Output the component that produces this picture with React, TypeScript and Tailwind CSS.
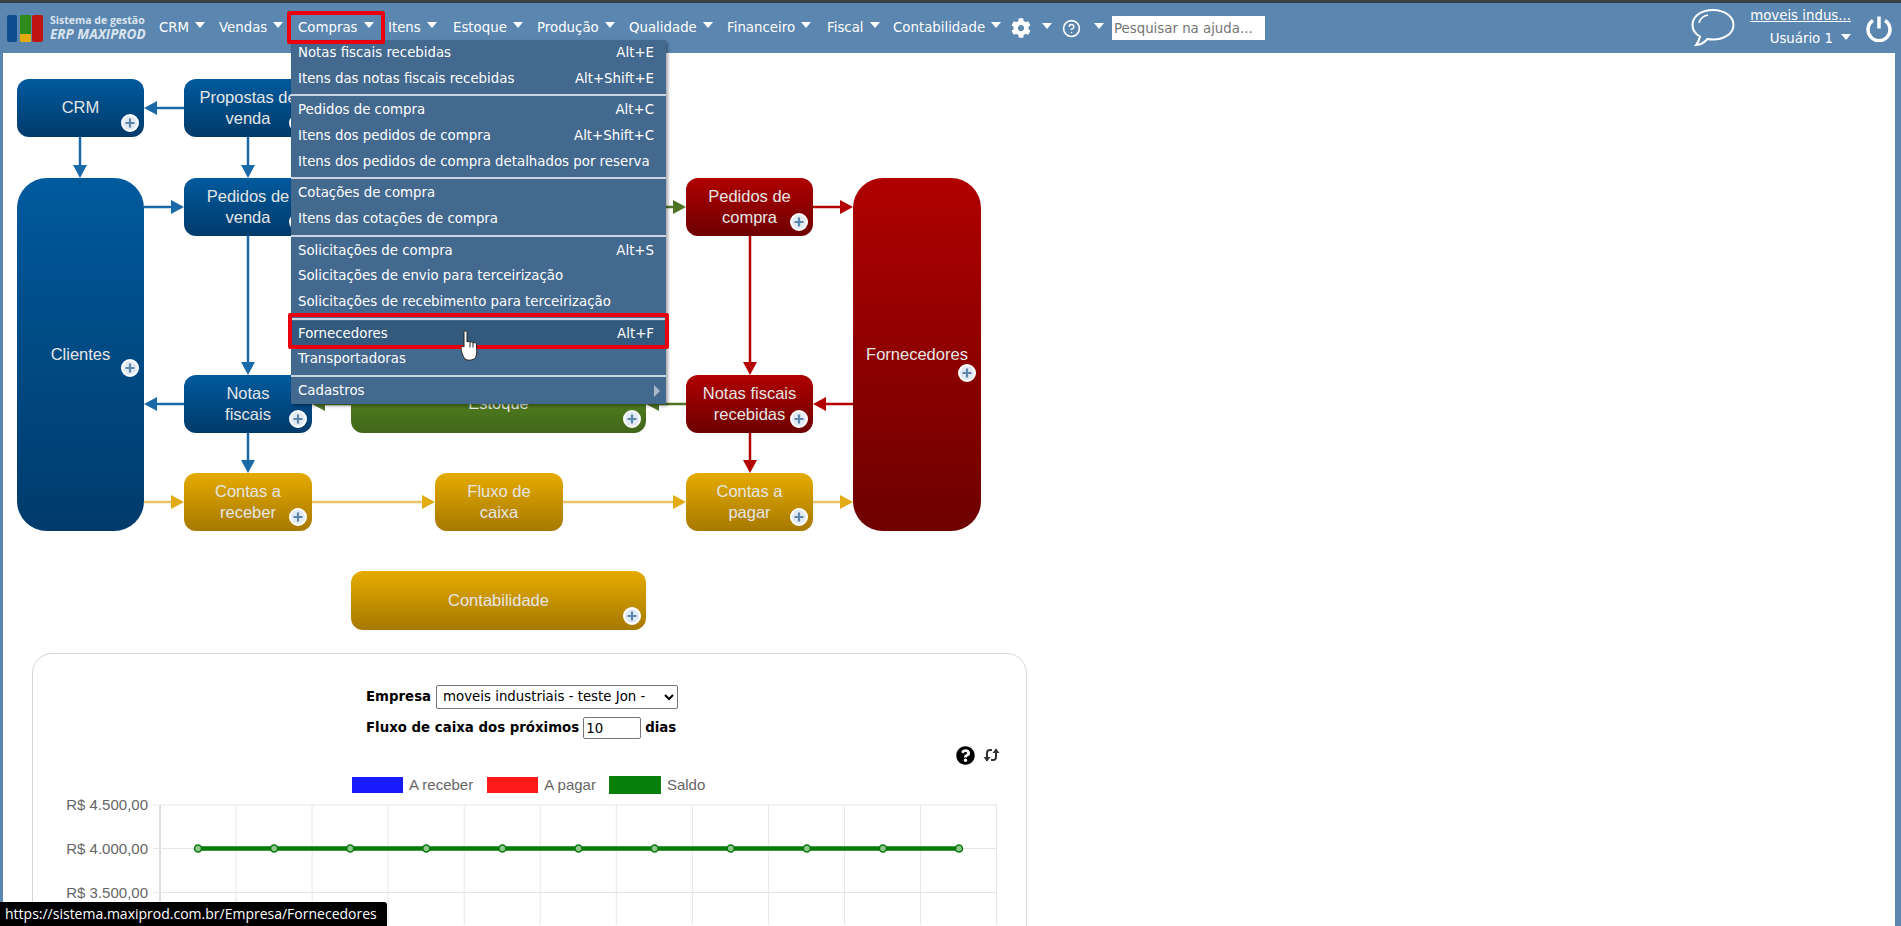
import React from 'react';
import { FaCog, FaQuestionCircle } from 'react-icons/fa';
import { CircleHelp } from 'lucide-react';

const sans = "font-['DejaVu_Sans',sans-serif]";

const navItems = [
  { label: 'CRM', w: 'w-[60px]' },
  { label: 'Vendas', w: 'w-[79px]' },
  { label: 'Compras', w: 'w-[90px]' },
  { label: 'Itens', w: 'w-[65px]' },
  { label: 'Estoque', w: 'w-[84px]' },
  { label: 'Produção', w: 'w-[92px]' },
  { label: 'Qualidade', w: 'w-[98px]' },
  { label: 'Financeiro', w: 'w-[100px]' },
  { label: 'Fiscal', w: 'w-[66px]' },
  { label: 'Contabilidade', w: 'w-[118px]' },
];

type MenuRow = { label: string; keys?: string; sub?: boolean; active?: boolean };

const menuGroups: MenuRow[][] = [
  [
    { label: 'Notas fiscais recebidas', keys: 'Alt+E' },
    { label: 'Itens das notas fiscais recebidas', keys: 'Alt+Shift+E' },
  ],
  [
    { label: 'Pedidos de compra', keys: 'Alt+C' },
    { label: 'Itens dos pedidos de compra', keys: 'Alt+Shift+C' },
    { label: 'Itens dos pedidos de compra detalhados por reserva' },
  ],
  [{ label: 'Cotações de compra' }, { label: 'Itens das cotações de compra' }],
  [
    { label: 'Solicitações de compra', keys: 'Alt+S' },
    { label: 'Solicitações de envio para terceirização' },
    { label: 'Solicitações de recebimento para terceirização' },
  ],
  [{ label: 'Fornecedores', keys: 'Alt+F', active: true }, { label: 'Transportadoras' }],
  [{ label: 'Cadastros', sub: true }],
];

const Tri = () => (
  <span className="inline-block w-0 h-0 border-l-[5px] border-r-[5px] border-t-[6px] border-l-transparent border-r-transparent border-t-white" />
);

const blue = 'from-[#005a9e] to-[#003b6b]';
const red = 'from-[#b00000] to-[#6e0000]';
const gold = 'from-[#e6ab00] to-[#a67900]';

const nodes: { label: string[]; cls: string; color: string; noPlus?: boolean; plus?: string }[] = [
  { label: ['CRM'], cls: 'left-[14px] top-[26px] w-[127px] h-[58px] rounded-[12px]', color: blue },
  { label: ['Propostas de', 'venda'], cls: 'left-[181px] top-[26px] w-[128px] h-[58px] rounded-[12px]', color: blue },
  { label: ['Clientes'], cls: 'left-[14px] top-[125px] w-[127px] h-[353px] rounded-[30px]', color: blue, plus: 'bottom-[154px]' },
  { label: ['Pedidos de', 'venda'], cls: 'left-[181px] top-[125px] w-[128px] h-[58px] rounded-[12px]', color: blue },
  { label: ['Notas', 'fiscais'], cls: 'left-[181px] top-[322px] w-[128px] h-[58px] rounded-[12px]', color: blue },
  { label: ['Estoque'], cls: 'left-[348px] top-[322px] w-[295px] h-[58px] rounded-[12px]', color: 'from-[#5d8f24] to-[#416619]' },
  { label: ['Pedidos de', 'compra'], cls: 'left-[683px] top-[125px] w-[127px] h-[58px] rounded-[12px]', color: red },
  { label: ['Notas fiscais', 'recebidas'], cls: 'left-[683px] top-[322px] w-[127px] h-[58px] rounded-[12px]', color: red },
  { label: ['Fornecedores'], cls: 'left-[850px] top-[125px] w-[128px] h-[353px] rounded-[30px]', color: red, plus: 'bottom-[149px]' },
  { label: ['Contas a', 'receber'], cls: 'left-[181px] top-[420px] w-[128px] h-[58px] rounded-[12px]', color: gold },
  { label: ['Fluxo de', 'caixa'], cls: 'left-[432px] top-[420px] w-[128px] h-[58px] rounded-[12px]', color: gold, noPlus: true },
  { label: ['Contas a', 'pagar'], cls: 'left-[683px] top-[420px] w-[127px] h-[58px] rounded-[12px]', color: gold },
  { label: ['Contabilidade'], cls: 'left-[348px] top-[518px] w-[295px] h-[59px] rounded-[12px]', color: gold },
];

// [x1, y1, x2, y2, colour of the line, colour of the head]; coordinates inside the diagram
const arrows: [number, number, number, number, string, string][] = [
  [181, 55, 141, 55, '#1b6aa8', '#1b6aa8'],
  [77, 84, 77, 125, '#1b6aa8', '#1b6aa8'],
  [245, 84, 245, 125, '#1b6aa8', '#1b6aa8'],
  [141, 154, 181, 154, '#1b6aa8', '#1b6aa8'],
  [245, 183, 245, 322, '#1b6aa8', '#1b6aa8'],
  [181, 351, 141, 351, '#1b6aa8', '#1b6aa8'],
  [245, 380, 245, 420, '#1b6aa8', '#1b6aa8'],
  [141, 449, 181, 449, '#ecc268', '#e2ab14'],
  [309, 449, 432, 449, '#ecc268', '#e2ab14'],
  [560, 449, 683, 449, '#ecc268', '#e2ab14'],
  [810, 449, 850, 449, '#ecc268', '#e2ab14'],
  [660, 154, 683, 154, '#4f7325', '#4f7325'],
  [348, 351, 309, 351, '#4f7325', '#4f7325'],
  [683, 351, 643, 351, '#4f7325', '#4f7325'],
  [810, 154, 850, 154, '#b30000', '#b30000'],
  [747, 183, 747, 322, '#b30000', '#b30000'],
  [850, 351, 810, 351, '#b30000', '#b30000'],
  [747, 380, 747, 420, '#b30000', '#b30000'],
];

const Arrow = ({ a }: { a: (typeof arrows)[number] }) => {
  const [x1, y1, x2, y2, line, head] = a;
  const dx = Math.sign(x2 - x1);
  const dy = Math.sign(y2 - y1);
  const bx = x2 - dx * 13;
  const by = y2 - dy * 13;
  const points = `${x2},${y2} ${bx - dy * 7},${by - dx * 7} ${bx + dy * 7},${by + dx * 7}`;
  return (
    <g>
      <line x1={x1} y1={y1} x2={bx} y2={by} stroke={line} strokeWidth="2.5" />
      <polygon points={points} fill={head} />
    </g>
  );
};

const Plus = ({ pos }: { pos?: string }) => (
  <span className={`absolute right-[5px] ${pos ?? 'bottom-[5px]'} w-[18px] h-[18px] rounded-full bg-[#e3eaf2] border-2 border-white flex items-center justify-center`}>
    <svg width="10" height="10" viewBox="0 0 10 10">
      <path d="M5 0.5v9M0.5 5h9" stroke="#5b86b0" strokeWidth="2.2" />
    </svg>
  </span>
);

const Chart = () => {
  const xs = Array.from({ length: 12 }, (_, i) => 127 + i * 76.05);
  const points = Array.from({ length: 11 }, (_, i) => 165 + i * 76.1);
  const rows = [
    { y: 30, label: 'R$ 4.500,00' },
    { y: 73.5, label: 'R$ 4.000,00' },
    { y: 117.5, label: 'R$ 3.500,00' },
  ];
  return (
    <svg width="970" height="150" viewBox="0 0 970 150" className="block">
      {xs.map((x, i) => (
        <line key={x} x1={x} y1={30} x2={x} y2={150} stroke={i === 0 ? '#bdbdbd' : '#e6e6e6'} />
      ))}
      {rows.map(r => (
        <g key={r.y}>
          <line x1={120} y1={r.y} x2={964} y2={r.y} stroke="#e6e6e6" />
          <text x={115} y={r.y + 5} textAnchor="end" fontSize="15" fill="#666" fontFamily="'Liberation Sans', sans-serif">
            {r.label}
          </text>
        </g>
      ))}
      <line x1={165} y1={73.5} x2={926} y2={73.5} stroke="#067a06" strokeWidth="4.5" />
      {points.map(x => (
        <circle key={x} cx={x} cy={73.5} r={3.5} fill="#8cc78c" stroke="#0a7a0a" strokeWidth="1.5" />
      ))}
    </svg>
  );
};

export default function App() {
  return (
    <div className="relative h-[926px] overflow-hidden bg-white">
      <div className="h-[3px] bg-[#3b4045]" />
      <header className={`h-[50px] bg-[#5b86b0] flex items-center text-[13.33px] text-white ${sans}`}>
        <div className="w-[159px] pl-[7px] flex items-center gap-[7px]">
          <svg width="36" height="27" viewBox="0 0 36 27" className="shrink-0">
            <rect x="0" width="10" height="27" rx="2" fill="#0f4f8f" />
            <rect x="13" width="11" height="19" rx="1" fill="#2f8a1e" />
            <rect x="13" y="19" width="11" height="8" rx="1" fill="#e5ac12" />
            <rect x="25" width="11" height="27" rx="2" fill="#c01414" />
          </svg>
          <div className="font-['Open_Sans',sans-serif] font-bold text-[#d9e4ef] whitespace-nowrap">
            <div className="text-[10.5px] leading-[13px]">Sistema de gestão</div>
            <div className="text-[13.5px] leading-[15px] italic">ERP MAXIPROD</div>
          </div>
        </div>
        {navItems.map(item => (
          <div key={item.label} className={`${item.w} shrink-0 flex items-center gap-[6px]`}>
            <span>{item.label}</span>
            <span className="mb-[5px] flex"><Tri /></span>
          </div>
        ))}
        <div className="w-[31px] shrink-0 flex">
          <FaCog className="w-[20px] h-[20px]" />
        </div>
        <span className="mb-[5px] flex w-[20px]"><Tri /></span>
        <CircleHelp className="w-[19px] h-[19px] shrink-0" strokeWidth={2} />
        <span className="ml-[13px] mb-[5px] flex w-[18px]"><Tri /></span>
        <input
          readOnly
          placeholder="Pesquisar na ajuda..."
          className="w-[153px] h-[24px] bg-white text-[13.33px] px-[2px] placeholder:text-[#757575] outline-none"
        />
        <div className="ml-auto flex items-center">
          <svg width="44" height="40" viewBox="0 0 44 40" fill="none" stroke="white" strokeWidth="2" className="mr-[14px]">
            <path d="M22 2C10 2 1.5 8.500 1.500 17c0 5 3 9 7.500 11.500-.5 3-2 6-4 8.500 5-.5 9-3 11.500-6 2 .4 3.500.5 5.500.5 11.500 0 20.500-6 20.500-14.500S33.500 2 22 2z" />
            <path d="M8 15c1-4 4-7 9-8" strokeWidth="1.500" />
          </svg>
          <div className="w-[108px] text-right pr-[6px]">
            <div className="underline leading-[20px] whitespace-nowrap">moveis indus...</div>
            <div className="leading-[25px] flex items-center justify-end gap-[8px] whitespace-nowrap">
              Usuário 1
              <span className="mb-[3px] flex"><Tri /></span>
            </div>
          </div>
          <svg width="26" height="27" viewBox="0 0 26 27" fill="none" stroke="white" strokeWidth="3.500" className="ml-[9px] mr-[9px]">
            <path d="M13 1.500v12" />
            <path d="M7 5.500a11 11 0 1 0 12 0" />
          </svg>
        </div>
      </header>

      <main className="border-l-[3px] border-r-[6px] border-[#5b86b0] h-[873px]">
        <section className="relative h-[600px]">
          <svg width="1000" height="600" className="absolute left-0 top-0">
            {arrows.map((a, i) => (
              <Arrow key={i} a={a} />
            ))}
          </svg>
          {nodes.map(n => (
            <div
              key={n.label.join(' ')}
              className={`absolute ${n.cls} bg-gradient-to-b ${n.color} flex flex-col items-center justify-center text-[16.5px] leading-[21.5px] text-[#e6e6e6] font-['Liberation_Sans',sans-serif]`}
            >
              {n.label.map(l => (
                <span key={l}>{l}</span>
              ))}
              {!n.noPlus && <Plus pos={n.plus} />}
            </div>
          ))}
        </section>

        <section className={`ml-[29px] w-[995px] h-[400px] rounded-[20px] border border-[#d6d6d6] bg-white ${sans}`}>
          <div className="pl-[333px] pt-[30px] text-[13.33px] font-bold text-black">
            <div className="flex items-center gap-[5px] h-[25px]">
              <span>Empresa</span>
              <select className="w-[242px] h-[24px] border border-[#767676] rounded-[2px] bg-white text-[13.33px] font-normal pl-[2px]">
                <option>moveis industriais - teste Jon -</option>
              </select>
            </div>
            <div className="flex items-center gap-[4px] h-[22px] mt-[8px]">
              <span>Fluxo de caixa dos próximos</span>
              <input readOnly value="10" className="w-[58px] h-[22px] border border-[#767676] rounded-[2px] text-[13.33px] font-normal px-[2px]" />
              <span>dias</span>
            </div>
          </div>
          <div className="flex justify-end items-center gap-[8px] pr-[26px] mt-[7px] h-[18px]">
            <FaQuestionCircle className="w-[19px] h-[19px] text-black" />
            <svg width="17" height="16" viewBox="0 0 17 16" fill="none" stroke="#333" strokeWidth="2">
              <path d="M4 14V6c0-2 1-3 3-3h2" />
              <path d="M0.500 10 4 14.500 7.500 10z" fill="#333" stroke="none" />
              <path d="M13 2v8c0 2-1 3-3 3H8" />
              <path d="M9.500 6 13 1.500 16.500 6z" fill="#333" stroke="none" />
            </svg>
          </div>
          <div className="flex items-center gap-[6px] ml-[319px] mt-[12px] h-[18px] text-[15px] text-[#666] font-['Liberation_Sans',sans-serif]">
            <span className="w-[51px] h-[16px] bg-[#1a1aff]" />
            <span className="mr-[8px]">A receber</span>
            <span className="w-[51px] h-[16px] bg-[#ff1a1a]" />
            <span className="mr-[7px]">A pagar</span>
            <span className="w-[52px] h-[18px] bg-[#087f08]" />
            <span>Saldo</span>
          </div>
          <div className="-mt-[19px]">
            <Chart />
          </div>
        </section>
      </main>

      {/* dropdown that is open over the page */}
      <div className={`absolute left-[291px] top-[40px] w-[375px] h-[364px] bg-[#44698f] shadow-[2px_2px_3px_rgba(0,0,0,0.35)] text-[13.33px] text-white ${sans}`}>
        {menuGroups.map((group, g) => (
          <div key={g} className={g > 0 ? 'border-t-2 border-[#c9d5e1] mt-[3px] pt-[1px]' : ''}>
            {group.map(row => (
              <div
                key={row.label}
                className={`h-[25.700px] pl-[7px] pr-[12px] flex items-center justify-between whitespace-nowrap ${row.active ? 'bg-[#33597d]' : ''}`}
              >
                <span>{row.label}</span>
                {row.keys && <span>{row.keys}</span>}
                {row.sub && (
                  <span className="w-0 h-0 border-y-[6px] border-l-[6px] -mr-[6px] border-y-transparent border-l-[#a9bccd]" />
                )}
              </div>
            ))}
          </div>
        ))}
      </div>

      {/* red marks from the screenshot annotation */}
      <div className="absolute left-[287px] top-[11px] w-[98px] h-[33px] border-[4px] border-[#e8000f] rounded-[2px]" />
      <div className="absolute left-[288px] top-[313px] w-[381px] h-[36px] border-[4px] border-[#e8000f] rounded-[2px]" />

      <svg width="20" height="32" viewBox="0 0 20 32" className="absolute left-[461px] top-[330px]">
        <path
          d="M3 2.500c0-2 3-2 3 0V12c1-1 3-1 3 .5 1-1 3-1 3 .5 1-1 3.500-.5 3.500 1.500 0 4 1 10-1 13-2 3-8 3.500-10.500 1.500C2 27 0 21 0 18c0-2 2-2 3-1z"
          fill="white"
          stroke="#222"
          strokeWidth="1"
        />
        <path d="M9 12.500v5M12 13v4.500M15.500 14.500v3" stroke="#222" strokeWidth="1" />
      </svg>

      <div className="absolute left-0 bottom-0 w-[387px] h-[24px] bg-black text-white text-[14px] leading-[24px] pl-[5px] rounded-tr-[3px] font-['Open_Sans',sans-serif] whitespace-nowrap">
        https://sistema.maxiprod.com.br/Empresa/Fornecedores
      </div>
    </div>
  );
}
